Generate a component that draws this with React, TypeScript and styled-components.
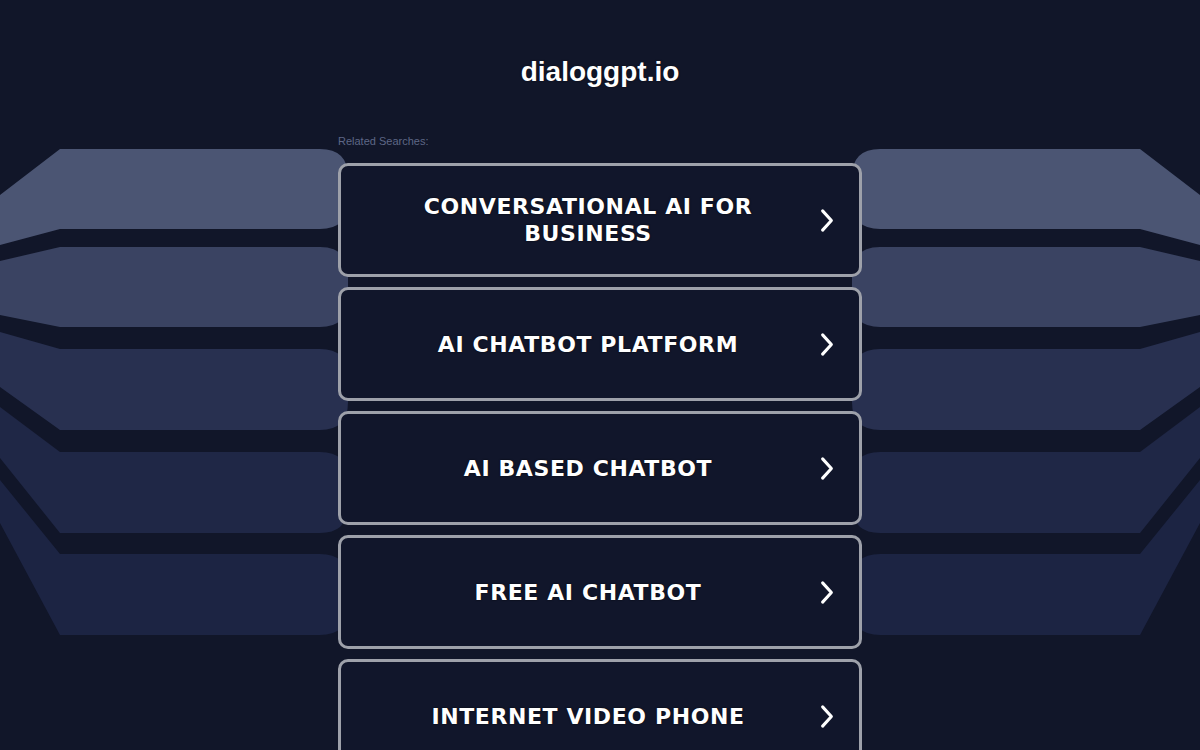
import styled, { createGlobalStyle } from "styled-components";

const searches = [
  "Conversational AI for Business",
  "AI Chatbot Platform",
  "AI Based Chatbot",
  "Free AI Chatbot",
  "Internet Video Phone",
];

// left-side bands: top/bottom at the flat part, tl/bl where the slant meets x=0
const bands = [
  { top: 149, bottom: 229, tl: 195, bl: 245, color: "#4b5573" },
  { top: 247, bottom: 327, tl: 261, bl: 315, color: "#3a4362" },
  { top: 349, bottom: 430, tl: 332, bl: 387, color: "#283050" },
  { top: 452, bottom: 533, tl: 407, bl: 458, color: "#1f2746" },
  { top: 554, bottom: 635, tl: 480, bl: 523, color: "#1c2443" },
];

function bandPath(b: (typeof bands)[number]) {
  const r = 28;
  return `M0 ${b.tl} L60 ${b.top} L${348 - r} ${b.top} Q348 ${b.top} 348 ${b.top + r}
    L348 ${b.bottom - r} Q348 ${b.bottom} ${348 - r} ${b.bottom} L60 ${b.bottom} L0 ${b.bl} Z`;
}

export default function App() {
  return (
    <Page>
      <GlobalStyle />
      <Backdrop viewBox="0 0 1200 750" aria-hidden>
        {bands.map((b, i) => (
          <g key={i} fill={b.color}>
            <path d={bandPath(b)} />
            <path d={bandPath(b)} transform="translate(1200 0) scale(-1 1)" />
          </g>
        ))}
      </Backdrop>
      <Content>
        <Title>dialoggpt.io</Title>
        <Related>Related Searches:</Related>
        <List>
          {searches.map((s) => (
            <Card key={s} href="#">
              <Label>{s}</Label>
              <Chevron viewBox="0 0 16 28">
                <polyline points="3,3 13,14 3,25" />
              </Chevron>
            </Card>
          ))}
        </List>
      </Content>
    </Page>
  );
}

const GlobalStyle = createGlobalStyle`
  html, body {
    margin: 0;
    padding: 0;
    background: #111629;
  }
`;

const Page = styled.div`
  position: relative;
  height: 750px;
  overflow: hidden;
  background: #111629;
  font-family: "Liberation Sans", Arial, sans-serif;
`;

const Backdrop = styled.svg`
  position: absolute;
  left: 0;
  top: 0;
  width: 1200px;
  height: 750px;
`;

const Content = styled.main`
  position: relative;
  width: 524px;
  margin: 0 auto;
`;

const Title = styled.h1`
  margin: 0;
  padding-top: 56px;
  font-size: 28px;
  line-height: 32px;
  font-weight: 700;
  color: #ffffff;
  text-align: center;
  text-shadow: 0 0 2px rgba(0, 0, 0, 0.6);
`;

const Related = styled.div`
  margin-top: 46px;
  font-size: 11px;
  line-height: 14px;
  color: #5e6786;
`;

const List = styled.div`
  display: flex;
  flex-direction: column;
  gap: 10px;
  margin-top: 15px;
`;

const Card = styled.a`
  box-sizing: border-box;
  height: 114px;
  display: flex;
  align-items: center;
  padding: 0 25px 0 15px;
  border: 3px solid #9ea1aa;
  border-radius: 10px;
  background: #11162b;
  text-decoration: none;
`;

const Label = styled.span`
  flex: 1;
  padding: 0 50px;
  text-align: center;
  font-family: "DejaVu Sans", Verdana, sans-serif;
  font-weight: 700;
  font-size: 22px;
  line-height: 27px;
  text-transform: uppercase;
  letter-spacing: 0.6px;
  color: #ffffff;
  text-shadow: 0 0 2px rgba(0, 0, 0, 0.8);
`;

const Chevron = styled.svg`
  width: 14px;
  height: 25px;
  fill: none;
  stroke: #ffffff;
  stroke-width: 3.5;
  stroke-linecap: round;
  stroke-linejoin: round;
`;
